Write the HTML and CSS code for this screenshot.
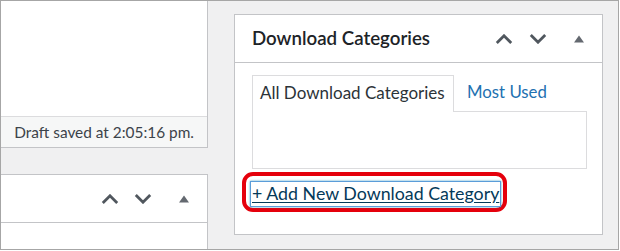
FILE: index.html
```html
<!DOCTYPE html>
<html lang="en">
<head>
<meta charset="utf-8">
<title>Download Categories</title>
<link rel="stylesheet" href="styles.css">
</head>
<body>
<div class="frame">
  <div class="col-left">
    <div class="editor">
      <div class="editor-body"></div>
      <div class="draft">Draft saved at 2:05:16 pm.</div>
    </div>
    <div class="postbox left-box">
      <div class="pb-header">
        <h2 class="pb-title"></h2>
        <div class="handles">
          <button class="hbtn hbtn-move" aria-label="Move up"><svg width="18" height="10" viewBox="0 0 18 10"><polyline points="1.8,9 9,1.8 16.2,9" fill="none" stroke="#50575e" stroke-width="2.8"/></svg></button>
          <button class="hbtn hbtn-move" aria-label="Move down"><svg width="18" height="10" viewBox="0 0 18 10"><polyline points="1.8,1 9,8.2 16.2,1" fill="none" stroke="#50575e" stroke-width="2.8"/></svg></button>
          <button class="hbtn hbtn-toggle" aria-label="Toggle panel"><svg width="10" height="8" viewBox="0 0 10 8"><polygon points="0,7.5 5,0.5 10,7.5" fill="#646970"/></svg></button>
        </div>
      </div>
      <div class="pb-inside"></div>
    </div>
  </div>
  <div class="postbox cat-box">
    <div class="pb-header">
      <h2 class="pb-title">Download Categories</h2>
      <div class="handles">
        <button class="hbtn hbtn-move" aria-label="Move up"><svg width="18" height="10" viewBox="0 0 18 10"><polyline points="1.8,9 9,1.8 16.2,9" fill="none" stroke="#50575e" stroke-width="2.8"/></svg></button>
        <button class="hbtn hbtn-move" aria-label="Move down"><svg width="18" height="10" viewBox="0 0 18 10"><polyline points="1.8,1 9,8.2 16.2,1" fill="none" stroke="#50575e" stroke-width="2.8"/></svg></button>
        <button class="hbtn hbtn-toggle" aria-label="Toggle panel"><svg width="10" height="8" viewBox="0 0 10 8"><polygon points="0,7.5 5,0.5 10,7.5" fill="#646970"/></svg></button>
      </div>
    </div>
    <div class="inside">
      <ul class="tabs">
        <li class="tab tab-active">All Download Categories</li>
        <li class="tab"><a class="tab-link" href="#">Most Used</a></li>
      </ul>
      <div class="panel"></div>
      <div class="add-row">
        <span class="highlight"><a class="add-link" href="#">+ Add New Download Category</a></span>
      </div>
    </div>
  </div>
</div>
</body>
</html>
```
FILE: styles.css
```css
* { box-sizing: border-box; }
html, body { margin: 0; padding: 0; background: #fff; }
body { font-family: Lato, "Open Sans", sans-serif; color: #1d2327; }

.frame {
  width: 619px;
  height: 250px;
  border: 1px solid #a6a6a6;
  background: #f0f0f1;
  display: flex;
  align-items: flex-start;
  overflow: hidden;
}

.col-left {
  width: 207px;
  display: flex;
  flex-direction: column;
}

.editor {
  height: 147px;
  background: #fff;
  border-right: 1px solid #c3c4c7;
  border-bottom: 1px solid #c3c4c7;
  display: flex;
  flex-direction: column;
}
.editor-body { flex: 1; }
.draft {
  height: 31px;
  border-top: 1px solid #dcdcde;
  background: #f6f7f7;
  color: #3c434a;
  font-size: 15.4px;
  display: flex;
  align-items: center;
  justify-content: flex-end;
  padding-right: 13px;
}

.postbox {
  background: #fff;
  border: 1px solid #c3c4c7;
}
.left-box {
  margin-top: 26px;
  height: 80px;
  border-left: 0;
}
.cat-box {
  margin-left: 26px;
  margin-top: 13px;
  width: 369px;
  height: 221px;
}

.pb-header {
  height: 48px;
  border-bottom: 1px solid #c3c4c7;
  display: flex;
  align-items: center;
}
.pb-title {
  flex: 1;
  margin: 0;
  padding-left: 17px;
  padding-bottom: 1px;
  font-size: 18.7px;
  font-weight: 600;
  color: #1d2327;
  white-space: nowrap;
}
.handles { display: flex; height: 100%; }
.hbtn {
  height: 100%;
  border: 0;
  background: none;
  padding: 0;
  display: flex;
  align-items: center;
  justify-content: center;
}
.hbtn-move { width: 34px; }
.hbtn-toggle { width: 47px; }
.left-box .hbtn-move:first-child { width: 33px; }

.inside { padding: 12px 15px 0 7px; }
.tabs {
  list-style: none;
  margin: 0 0 0 10px;
  padding: 0;
  display: flex;
  align-items: flex-end;
  height: 36px;
}
.tab {
  height: 36px;
  display: flex;
  align-items: center;
  padding-bottom: 4px;
  font-size: 17px;
  white-space: nowrap;
}
.tab-active {
  width: 202px;
  padding-left: 7px;
  border: 1px solid #dcdcde;
  border-bottom: 0;
  background: #fff;
  position: relative;
  z-index: 1;
  height: 37px;
  margin-bottom: -1px;
  color: #2c3338;
}
.tab-link {
  margin-left: 13px;
  color: #2271b1;
  text-decoration: none;
  font-size: 16.8px;
}
.panel {
  margin-left: 10px;
  height: 58px;
  border: 1px solid #dcdcde;
}

.add-row { margin-top: 3px; }
.highlight {
  display: inline-block;
  border: 4px solid #e5000c;
  border-radius: 11px;
  padding: 5px 2px 1px 4px;
}
.add-link {
  display: block;
  height: 26px;
  line-height: 23px;
  padding: 0 1px;
  border: 1px solid #5b9dd9;
  box-shadow: 0 0 2px rgba(30, 140, 190, 0.8);
  color: #043959;
  font-size: 17.8px;
  text-decoration: underline;
  text-underline-offset: 2px;
  white-space: nowrap;
}
```
